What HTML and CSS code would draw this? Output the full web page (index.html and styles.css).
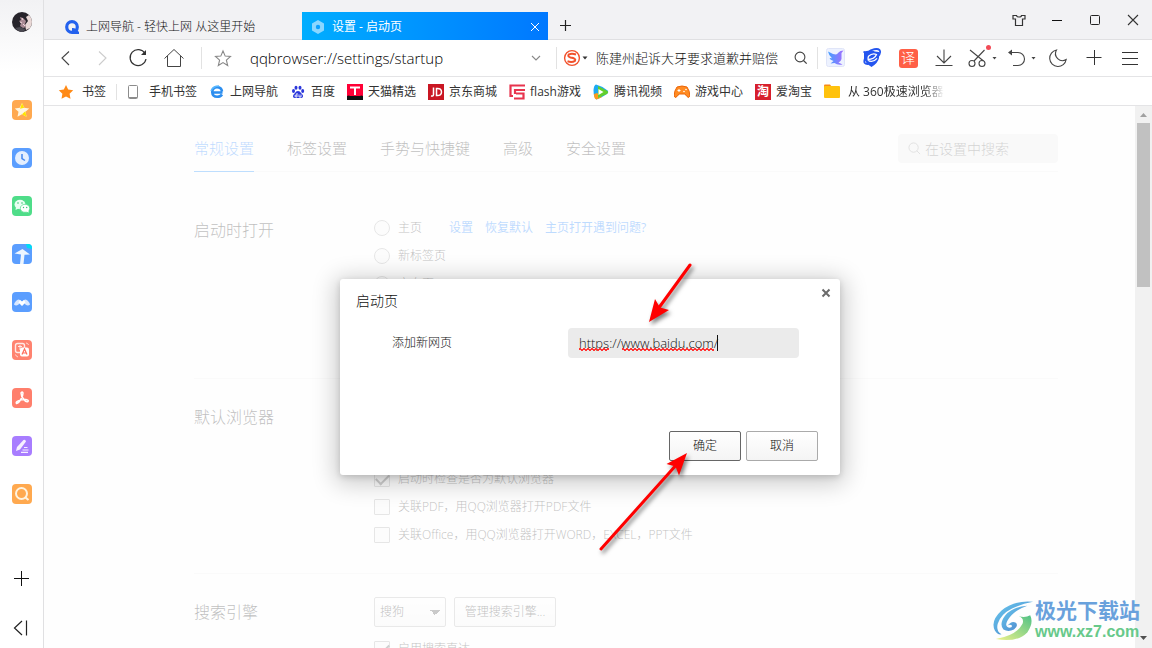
FILE: index.html
```html
<!DOCTYPE html>
<html lang="zh-CN">
<head>
<meta charset="utf-8">
<title>设置 - 启动页</title>
<link rel="stylesheet" href="styles.css">
</head>
<body>
<div class="browser">
  <aside class="sidebar">
    <button class="side-btn" aria-label="账号">
      <svg viewBox="0 0 20 20"><circle cx="10" cy="10" r="10" fill="#27242b"/><path d="M17 3a10 10 0 0 1 1 13l-4 2-1-5 3-4-2-4z" fill="#e9d8d6"/><path d="M8 5l3 1 3 3-1 3 1 3-3 1-3-2 1-3-2-2 2-1z" fill="#a98a94"/><path d="M10 6l1 2M8 10l2 1M11 12l2 2" stroke="#f0d7dc"/><path d="M3 16l5-1 5 2-1 3H8z" fill="#4b4951"/></svg>
    </button>
    <nav class="side-apps">
      <button class="side-btn" aria-label="收藏"><svg viewBox="0 0 20 20"><rect width="20" height="20" rx="4" fill="#ffa950"/><path d="M10 3l2.200 4.800 5 .6-3.700 3.400 1 5-4.500-2.500-4.500 2.500 1-5-3.700-3.400 5-.6z" fill="#fff6df"/><path d="M10 3l2.200 4.800-4.200 1zM14.500 16.800L10 14.300l3.300-3z" fill="#ffe500"/></svg></button>
      <button class="side-btn" aria-label="历史"><svg viewBox="0 0 20 20"><rect width="20" height="20" rx="4" fill="#5b9eff"/><circle cx="10" cy="10" r="7" fill="#e4efff"/><path d="M10 6v4.500l3 2" fill="none" stroke="#4286ee" stroke-width="1.500"/></svg></button>
      <button class="side-btn" aria-label="微信"><svg viewBox="0 0 20 20"><rect width="20" height="20" rx="4" fill="#4fdd89"/><ellipse cx="8" cy="8.500" rx="5.500" ry="4.700" fill="#e9fff2"/><path d="M4 11l-.5 3 3-1.500z" fill="#e9fff2"/><ellipse cx="13" cy="12.300" rx="4.700" ry="4" fill="#fff" stroke="#4fdd89" stroke-width=".7"/><path d="M14 15l2.500 1.700v-3z" fill="#fff"/><g fill="#3bc475"><circle cx="6" cy="7" r=".8"/><circle cx="10" cy="7" r=".8"/><circle cx="11.500" cy="11.500" r=".7"/><circle cx="14.700" cy="11.500" r=".7"/></g></svg></button>
      <button class="side-btn" aria-label="文档"><svg viewBox="0 0 20 20"><rect width="20" height="20" rx="4" fill="#5b9eff"/><path d="M14 0h2a4 4 0 0 1 4 4v1l-5-1z" fill="#00dcf4"/><path d="M2.500 9.500L10.500 5l7.500 5.500-5.500.3L11.500 20H8l1-9.500z" fill="#eef6ff"/></svg></button>
      <button class="side-btn" aria-label="会议"><svg viewBox="0 0 20 20"><rect width="20" height="20" rx="4" fill="#5b9eff"/><path d="M2 12.500Q2 11 4 9q2-2.500 4-1l2 1.500 2-1.500q2-1.500 4 1 2 2 2 3.500-2 2-4.500 0L12 11l-2 2-2-2-1.500 1.500q-2.500 2-4.500 0z" fill="#d9e8ff"/><path d="M8 8l2 1.700L12 8l1.500 2.500L10 14l-3.500-3.500z" fill="#fff"/></svg></button>
      <button class="side-btn" aria-label="翻译"><svg viewBox="0 0 20 20"><rect width="20" height="20" rx="4" fill="#ff8370"/><rect x="3.500" y="3.500" width="9" height="9" rx="2" fill="none" stroke="#ffe9e5" stroke-width="1.400"/><path d="M6 6.500h4M8 5v5" stroke="#ffe9e5"/><rect x="8" y="7.500" width="9" height="9" rx="2" fill="#fff"/><path d="M10 14.500l2.500-5.500 2.500 5.500M11 13h3" fill="none" stroke="#ff6d5c" stroke-width="1.200"/><path d="M14 3q2 0 2.500 2M3.500 14.500q.5 2 2.500 2.500" fill="none" stroke="#ffd8d2"/></svg></button>
      <button class="side-btn" aria-label="PDF"><svg viewBox="0 0 20 20"><rect width="20" height="20" rx="4" fill="#ff7f6c"/><path d="M9 5q1.500-2 2 0 0 3-2 6-2 4-4.500 4.500-1-1.500 1.500-2.500 4-1.800 8-1.500 3 .5 2 2-2 1-4-2Q9 8.500 9 5z" fill="none" stroke="#fff" stroke-width="1.500"/></svg></button>
      <button class="side-btn" aria-label="笔记"><svg viewBox="0 0 20 20"><rect width="20" height="20" rx="4" fill="#a87dff"/><path d="M4 15l1-4 6.500-7q2-1 2.500 1.500L8 13.500z" fill="#f6f0ff"/><path d="M12 11.500h3.500M10.500 14h6M9 16.300h7" stroke="#f6f0ff" stroke-width="1.200"/></svg></button>
      <button class="side-btn" aria-label="搜索"><svg viewBox="0 0 20 20"><rect width="20" height="20" rx="4" fill="#ffa94f"/><circle cx="9.500" cy="9.500" r="5.500" fill="none" stroke="#fff3df" stroke-width="2"/><path d="M13.500 13.500l3 2.500" stroke="#fff3df" stroke-width="2.200"/></svg></button>
    </nav>
    <div class="side-foot">
      <button class="side-btn" aria-label="添加"><svg viewBox="0 0 20 20"><path d="M2 10.500h15M9.500 3v15" stroke="#111"/></svg></button>
      <button class="side-btn" aria-label="收起"><svg viewBox="0 0 20 20"><path d="M10 3L2.500 10 10 17M14.500 2.500v15" fill="none" stroke="#222" stroke-width="1.200"/></svg></button>
    </div>
  </aside>

  <div class="window">
    <header class="tabstrip">
      <div class="tab">
        <svg class="tab-icon" viewBox="0 0 14 14"><circle cx="7" cy="7" r="5.300" fill="none" stroke="#2462ee" stroke-width="3.200"/><path d="M7 8q3-.5 5 2l2 2v2H7z" fill="#2462ee"/></svg>
        <span>上网导航 - 轻快上网 从这里开始</span>
      </div>
      <div class="tab tab-active">
        <svg class="tab-icon" viewBox="0 0 14 14"><path d="M7 0l6 3.500v7L7 14l-6-3.500v-7z" fill="#8bd7ff"/><circle cx="7" cy="7" r="2.200" fill="#0ba0ff"/></svg>
        <span>设置 - 启动页</span>
        <button class="tab-close" aria-label="关闭标签页"><svg viewBox="0 0 10 10"><path d="M1 1l8 8M9 1L1 9" stroke="#fff"/></svg></button>
      </div>
      <button class="newtab" aria-label="新建标签页"><svg viewBox="0 0 12 12"><path d="M0 5.500h11M5.500 0v11" stroke="#222" stroke-width="1.200"/></svg></button>
      <div class="window-controls">
        <button aria-label="皮肤"><svg viewBox="0 0 14 14"><path d="M1 2.500h3.500q0 1.500 2.500 1.500t2.500-1.500H13V6h-2.500v6.500h-7V6H1z" fill="none" stroke="#333" stroke-width="1.200"/></svg></button>
        <button aria-label="最小化"><svg viewBox="0 0 14 14"><path d="M2 7.500h10" stroke="#111"/></svg></button>
        <button aria-label="最大化"><svg viewBox="0 0 14 14"><rect x="2.500" y="2.500" width="9" height="9" rx="1" fill="none" stroke="#222"/></svg></button>
        <button aria-label="关闭"><svg viewBox="0 0 14 14"><path d="M2 2l10 10M12 2L2 12" stroke="#333" stroke-width="1.100"/></svg></button>
      </div>
    </header>

    <div class="toolbar">
      <button class="tool" aria-label="后退"><svg viewBox="0 0 20 20"><path d="M13 3.500L6 10l7 7" fill="none" stroke="#444" stroke-width="1.100"/></svg></button>
      <button class="tool" aria-label="前进"><svg viewBox="0 0 20 20"><path d="M7 3.500l7 6.500-7 7" fill="none" stroke="#ccc" stroke-width="1.100"/></svg></button>
      <button class="tool" aria-label="刷新"><svg viewBox="0 0 20 20"><path d="M17 5.500A8 8 0 1 0 18 11" fill="none" stroke="#333" stroke-width="1.200"/><path d="M18 2v5h-5z" fill="#333"/></svg></button>
      <button class="tool" aria-label="主页"><svg viewBox="0 0 20 20"><path d="M.5 10.500L10 1.500l9.500 9M3.500 8v10.500h13V8" fill="none" stroke="#444"/></svg></button>
      <span class="divider divider-nav"></span>
      <button class="tool" aria-label="收藏此页"><svg viewBox="0 0 20 20"><path d="M10 3l2.200 5.100 5.300.4-4.100 3.600 1.300 5.400-4.700-2.900-4.700 2.900 1.300-5.400-4.100-3.600 5.300-.4z" fill="none" stroke="#888" stroke-width="1.100"/></svg></button>
      <input class="address" type="text" aria-label="地址" value="qqbrowser://settings/startup">
      <button class="tool" aria-label="展开地址"><svg viewBox="0 0 20 20"><path d="M4 8l4 4 4-4" fill="none" stroke="#888" stroke-width="1.100"/></svg></button>
      <span class="divider"></span>
      <div class="quick-search">
        <button class="engine" aria-label="搜狗"><svg viewBox="0 0 26 18"><circle cx="9" cy="9" r="7.400" fill="none" stroke="#f2512c" stroke-width="1.400"/><path d="M13 5.500Q9 4 6 5.300q-2 2 1.500 3.200 6 .8 4.500 3.300-3 2-7.500.5" fill="none" stroke="#f2512c" stroke-width="2"/><path d="M19.500 7.500h5L22 10.500z" fill="#333"/></svg></button>
        <input type="text" aria-label="搜索" value="陈建州起诉大牙要求道歉并赔偿">
        <button class="go" aria-label="开始搜索"><svg viewBox="0 0 14 14"><circle cx="6" cy="6" r="4.900" fill="none" stroke="#444" stroke-width="1.100"/><path d="M9.500 9.500l3.200 3.200" stroke="#444" stroke-width="1.200"/></svg></button>
      </div>
      <span class="divider"></span>
      <button class="tool" aria-label="飞鸟"><svg viewBox="0 0 20 20"><defs><linearGradient id="bird" x2="1"><stop stop-color="#43a0ff"/><stop offset="1" stop-color="#a26dff"/></linearGradient></defs><rect x=".5" y=".5" width="18" height="18" rx="2" fill="#edf2ff" stroke="#e0e5f8"/><path d="M2 3.500q4 2.500 8 3 1.500-.5 2.500-2 1.500-2 5-2l-2 2.500v6q-.5 2.500-3 3.500l4 2q-5 1-8-1.500l-4 .5 3-2.500Q4 12 3.500 10l2.500.3Q3 8 2 3.500z" fill="url(#bird)"/></svg></button>
      <button class="tool" aria-label="极速内核"><svg viewBox="0 0 20 20"><path d="M1.500 4q5 .5 8-2 6-2 8 0 2 3-2 7-5 6-10 7-4 0-3-4 1-4 6-8" fill="none" stroke="#2455ef" stroke-width="1.800"/><path d="M2 4q4 .5 7.500-2 3 2 7.500 2v6q-1 5-7.500 9-6.500-4-7.500-9z" fill="#2455ef"/><path d="M5.500 11.500q7 0 9-5-4-2-8 1.800-2 5 3 5 3 0 5.500-3" fill="none" stroke="#fff" stroke-width="1.300"/></svg></button>
      <button class="tool" aria-label="翻译"><span class="translate">译</span></button>
      <button class="tool" aria-label="下载"><svg viewBox="0 0 20 20"><path d="M10 1.500v13M3 8l7 7 7-7M1.500 17.500h17" fill="none" stroke="#444" stroke-width="1.100"/></svg></button>
      <button class="tool tool-menu" aria-label="截图"><svg viewBox="0 0 32 26"><g fill="none" stroke="#444" stroke-width="1.100"><path d="M4 5l13.500 11M18.500 5L8 16"/><circle cx="6" cy="18.500" r="3"/><circle cx="16" cy="18.500" r="3"/></g><circle cx="22.500" cy="2.500" r="2.500" fill="#f24b57"/><path d="M26.500 12h4l-2 2.500z" fill="#444"/></svg></button>
      <button class="tool tool-menu" aria-label="撤销"><svg viewBox="0 0 32 26"><path d="M5 7.500h8a6.500 6.500 0 0 1 0 13H8" fill="none" stroke="#444" stroke-width="1.100"/><path d="M3 7.500L7 4.500v6zM26.500 12h4l-2 2.500z" fill="#444"/></svg></button>
      <button class="tool" aria-label="夜间模式"><svg viewBox="0 0 20 20"><path d="M8.500 2a8.300 8.300 0 1 0 9.700 9.500A7 7 0 0 1 8.500 2z" fill="none" stroke="#444" stroke-width="1.100"/></svg></button>
      <button class="tool" aria-label="添加扩展"><svg viewBox="0 0 20 20"><path d="M2.500 9.500h15M10.500 2v15" stroke="#333"/></svg></button>
      <button class="tool" aria-label="菜单"><svg viewBox="0 0 20 20"><path d="M2 4.500h16M2 10.500h16M2 16.500h16" stroke="#333"/></svg></button>
    </div>

    <nav class="bookmarks">
      <a class="bookmark bookmark-wide" href="#"><svg viewBox="0 0 16 16"><path d="M8 1l2.200 4.600 5 .7-3.600 3.500.9 5L8 12.400l-4.500 2.400.9-5L.8 6.300l5-.7z" fill="#ff8a16"/></svg>书签</a>
      <span class="divider divider-mark"></span>
      <a class="bookmark bookmark-wide" href="#"><svg viewBox="0 0 16 16"><rect x="3.500" y="1.500" width="9" height="13" rx="1" fill="#fff" stroke="#8c8c8c"/><path d="M4 13.500h8" stroke="#8c8c8c"/></svg>手机书签</a>
      <a class="bookmark" href="#"><svg viewBox="0 0 16 16"><path d="M13.500 8.500H4M13 7.500Q12.500 3.200 8 3.200T3.200 8q.3 4.800 5 4.800 3.300 0 4.800-2.300" fill="none" stroke="#2c8eef" stroke-width="2.600"/><path d="M2 7q2-5 8-5" fill="none" stroke="#56b7ff" stroke-width="1.500"/></svg>上网导航</a>
      <a class="bookmark" href="#"><svg viewBox="0 0 16 16"><g fill="#2b37db"><ellipse cx="3.500" cy="7" rx="1.500" ry="2"/><ellipse cx="6" cy="3.800" rx="1.500" ry="2"/><ellipse cx="10" cy="3.800" rx="1.500" ry="2"/><ellipse cx="12.700" cy="7" rx="1.500" ry="2"/><path d="M8 7q2 0 3 2 2.700 2 2 3.700-.8 1.800-3 1.300H6q-2.500.5-3-1.300-.5-1.700 2-3.700Q6 7 8 7z"/></g><path d="M7 9v4H5.500q-1.200-1 0-2H7M9 10.500v2.500h2v-2.500" fill="none" stroke="#fff" stroke-width=".9"/></svg>百度</a>
      <a class="bookmark" href="#"><svg viewBox="0 0 16 16"><path fill="#ff0036" d="M0 0h16v13H0z"/><path fill="#111" d="M0 12q2-1 3 0h10q1-1 3 0v4H0z"/><path d="M3 3.500h10M8 3.500V11" stroke="#fff" stroke-width="2"/></svg>天猫精选</a>
      <a class="bookmark" href="#"><svg viewBox="0 0 16 16"><path fill="#c91623" d="M0 0h16v16H0z"/><path d="M5.500 3.500v7q0 2-2.500 1.500M8.500 4.500v7q5 .5 5-3.500t-5-3.500z" fill="none" stroke="#fff" stroke-width="1.500"/></svg>京东商城</a>
      <a class="bookmark" href="#"><svg viewBox="0 0 16 16"><path d="M16 1.500H1.500V12H4M16 6H6v4M7 9.500h7.500v5H5" fill="none" stroke="#e8344e" stroke-width="2.200"/></svg>flash游戏</a>
      <a class="bookmark" href="#"><svg viewBox="0 0 16 16"><path d="M3 .5Q1 1 .5 6q0 8 3 9.500Q8 14 14.500 9.500q1.500-1.500 0-3Q9 2 3 .5z" fill="#1caaf2"/><path d="M1 10q0 5 2.500 5.500Q7 14 9 13L4 9z" fill="#ff9a1a"/><path d="M5 2l9.500 5q1.500 1.500-.5 3L5 14z" fill="#62cf2c"/><path d="M5.500 5v6l5-3z" fill="#fff"/></svg>腾讯视频</a>
      <a class="bookmark" href="#"><svg viewBox="0 0 16 16"><path d="M3 3q5-2 10 0 3 4 2.800 9-1 3-3.300 0L11 10H5l-1.500 2Q1 15 .2 12 0 7 3 3z" fill="#ff8b22" stroke="#ec6507"/><path d="M3.500 6.500h3M5 5v3" stroke="#fff"/><circle cx="10" cy="7.500" r=".8" fill="#fff"/><circle cx="12" cy="5.500" r=".8" fill="#fff"/></svg>游戏中心</a>
      <a class="bookmark" href="#"><span class="mark-tao">淘</span>爱淘宝</a>
      <a class="bookmark bookmark-wide bookmark-clip" href="#"><svg viewBox="0 0 16 16"><path d="M0 1.500Q0 .5 1 .5h5L8 3H0z" fill="#f98a16"/><rect y="2" width="16" height="12" rx="1" fill="#ffc20d"/></svg>从 360极速浏览器</a>
    </nav>

    <div class="viewport">
      <div class="page">
        <main class="settings">
          <div class="settings-head">
            <nav class="settings-tabs">
              <a class="current" href="#">常规设置</a>
              <a href="#">标签设置</a>
              <a href="#">手势与快捷键</a>
              <a href="#">高级</a>
              <a href="#">安全设置</a>
            </nav>
            <label class="settings-search">
              <svg viewBox="0 0 14 14"><circle cx="6" cy="6" r="5" fill="none" stroke="#888"/><path d="M9.500 9.500l3.500 3.500" stroke="#888"/></svg>
              <input type="text" placeholder="在设置中搜索" aria-label="在设置中搜索">
            </label>
          </div>
          <section class="group group-startup">
            <h2>启动时打开</h2>
            <div class="options">
              <div class="option">
                <label><input type="radio" name="startup"> 主页</label>
                <span class="links"><a href="#">设置</a><a href="#">恢复默认</a><a href="#">主页打开遇到问题?</a></span>
              </div>
              <div class="option"><label><input type="radio" name="startup"> 新标签页</label></div>
              <div class="option"><label><input type="radio" name="startup"> 空白页</label></div>
            </div>
          </section>
          <section class="group group-default">
            <h2>默认浏览器</h2>
            <div class="options">
              <div class="option"><label><input type="checkbox" checked> 启动时检查是否为默认浏览器</label></div>
              <div class="option"><label><input type="checkbox"> 关联PDF，用QQ浏览器打开PDF文件</label></div>
              <div class="option"><label><input type="checkbox"> 关联Office，用QQ浏览器打开WORD，EXCEL，PPT文件</label></div>
            </div>
          </section>
          <section class="group group-search">
            <h2>搜索引擎</h2>
            <div class="options">
              <div class="controls">
                <select aria-label="搜索引擎"><option>搜狗</option></select>
                <button class="btn btn-wide">管理搜索引擎...</button>
              </div>
              <div class="option"><label><input type="checkbox" checked> 启用搜索直达</label></div>
            </div>
          </section>
        </main>
        <div class="overlay">
          <form class="dialog" role="dialog" aria-labelledby="dialog-title">
            <div class="dialog-head">
              <h1 id="dialog-title">启动页</h1>
              <button class="dialog-close" type="button" aria-label="关闭"><svg viewBox="0 0 10 10"><path d="M1.500 1.500l7 7M8.500 1.500l-7 7" stroke="#6b6b6b" stroke-width="2"/></svg></button>
            </div>
            <div class="dialog-row">
              <label for="new-url">添加新网页</label>
              <div class="field">
                <input id="new-url" type="text" spellcheck="false" value="https://www.baidu.com/">
                <span class="squiggle squiggle-scheme"></span>
                <span class="squiggle squiggle-host"></span>
                <span class="caret"></span>
              </div>
            </div>
            <div class="dialog-actions">
              <button class="btn btn-primary" type="button">确定</button>
              <button class="btn" type="button">取消</button>
            </div>
          </form>
        </div>
      </div>
      <div class="scrollbar">
        <svg viewBox="0 0 17 17"><path d="M5 11h7L8.500 7z" fill="#a0a0a0"/></svg>
        <div class="thumb"></div>
        <svg class="scroll-down" viewBox="0 0 17 17"><path d="M5 6h7l-3.500 4z" fill="#505050"/></svg>
      </div>
    </div>
  </div>
</div>

<svg class="arrow arrow-field" viewBox="0 0 60 72"><path d="M50 5L18 49" stroke="#f00" stroke-width="3" stroke-linecap="round"/><path d="M9 62l6-23 5 8.500L29 50z" fill="#f00"/></svg>
<svg class="arrow arrow-confirm" viewBox="0 0 104 112"><path d="M9 103L86 17" stroke="#f00" stroke-width="3" stroke-linecap="round"/><path d="M95 7L74.500 18l9 2.500L87 29.500z" fill="#f00"/></svg>

<div class="watermark">
  <svg viewBox="0 0 46 44"><defs><linearGradient id="wave" y2="1"><stop stop-color="#68c9ef"/><stop offset="1" stop-color="#4c82c9"/></linearGradient><linearGradient id="leaf" x1="1" x2="0" y2="1"><stop stop-color="#4fc186"/><stop offset="1" stop-color="#eff28a"/></linearGradient></defs><path d="M44 3Q25 1 11 12-1 23 4 33q3 5 7 4-6-3-4-11 3-10 15-16Q32 5 44 3z" fill="url(#wave)"/><path d="M38 7Q23 8 15 17q-7 9-2 15 5 3 11 0 5-4 2-7-4-3-9 3 3-2 5 0 0 2-3 2-5-1-2-7Q23 12 38 7z" fill="url(#wave)"/><path d="M29 18q6 2 4 8-6 12-28 16 22 4 33-7 7-10 3-18-5 3-12 1z" fill="url(#leaf)"/></svg>
  <div class="watermark-text"><strong>极光下载站</strong><span>www.xz7.com</span></div>
</div>
</body>
</html>
```

FILE: styles.css
```css
* { box-sizing: border-box; }

body {
  margin: 0;
  font: 300 12px/16px "Open Sans", "Noto Sans CJK SC", sans-serif;
  color: #111;
  background: #fff;
  overflow: hidden;
}

button, input, select { font: inherit; color: inherit; }
button { padding: 0; border: 0; background: none; }
input { padding: 0; border: 0; background: none; min-width: 0; outline: 0; }
a { color: inherit; text-decoration: none; }
h1, h2 { margin: 0; font-weight: inherit; }
svg { display: block; flex: none; }

.browser { display: flex; height: 100vh; }

/* Sidebar */
.sidebar {
  flex: none;
  width: 44px;
  padding: 12px 0 10px;
  display: flex;
  flex-direction: column;
  align-items: center;
  border-right: 1px solid #e0e0e2;
  background: linear-gradient(#f2f2f4, #fff 72px);
}
.side-btn, .side-btn svg { width: 20px; height: 20px; }
.side-apps, .side-foot { display: flex; flex-direction: column; gap: 28px; }
.side-apps { margin-top: 68px; }
.side-foot { margin-top: auto; gap: 30px; }

.window { flex: 1; min-width: 0; display: flex; flex-direction: column; }

/* Tab strip */
.tabstrip {
  height: 40px;
  padding-left: 12px;
  display: flex;
  align-items: flex-end;
  background: #f2f2f4;
  box-shadow: inset 0 -1px #e0e0e2;
}
.tab {
  width: 246px;
  height: 28px;
  padding: 1px 8px 0 9px;
  display: flex;
  align-items: center;
  gap: 7px;
}
.tab-icon { width: 14px; height: 14px; }
.tab-active { color: #fff; background: linear-gradient(90deg, #00aeff, #0078ff); font-weight: 400; }
.tab-close { margin-left: auto; }
.tab-close svg { width: 10px; height: 10px; }
.newtab { width: 36px; height: 28px; display: grid; place-items: center; }
.newtab svg { width: 12px; height: 12px; }
.window-controls { margin-left: auto; align-self: stretch; display: flex; }
.window-controls button { width: 38px; display: grid; place-items: center; }
.window-controls svg { width: 14px; height: 14px; }

/* Toolbar */
.toolbar {
  height: 37px;
  padding: 0 4px;
  display: flex;
  align-items: center;
  border-bottom: 1px solid #e4e4e6;
}
.tool { flex: none; width: 36px; height: 36px; display: grid; place-items: center; }
.tool svg { width: 20px; height: 20px; }
.tool-menu { width: 39px; }
.tool-menu svg { width: 32px; height: 26px; }
.divider { flex: none; width: 1px; height: 22px; background: #e2e2e2; }
.divider-nav { margin: 0 3px 0 9px; }
.address {
  flex: 1;
  padding-left: 9px;
  font-size: 15px;
  line-height: 24px;
  color: #000;
}
.quick-search { width: 260px; padding: 0 9px 0 6px; display: flex; align-items: center; gap: 7px; }
.quick-search input { flex: 1; font-size: 13px; line-height: 20px; }
.engine svg { width: 26px; height: 18px; }
.go svg { width: 14px; height: 14px; }
.translate {
  width: 19px;
  height: 19px;
  border-radius: 3px;
  background: #ff5f46;
  color: #fff;
  font-size: 14px;
  line-height: 18px;
}

/* Bookmarks bar */
.bookmarks {
  height: 29px;
  padding: 1px 0 0 14px;
  display: flex;
  align-items: center;
  gap: 12px;
  border-bottom: 1px solid #e4e4e6;
  font-weight: 400;
  color: #333;
  white-space: nowrap;
}
.bookmark { flex: none; display: flex; align-items: center; gap: 5px; }
.bookmark svg { width: 16px; height: 16px; }
.bookmark-wide { gap: 8px; }
.divider-mark { height: 16px; margin: 0 -4px 0 -2px; }
.mark-tao { width: 16px; height: 16px; background: #d71f2c; color: #fff; text-align: center; font-weight: 700; line-height: 15px; }
.bookmark-clip { mask-image: linear-gradient(90deg, #000 100px, transparent 120px); }

/* Settings page */
.viewport { flex: 1; min-height: 0; display: flex; }
.page { position: relative; flex: 1; min-width: 0; overflow: hidden; }
.settings { padding: 28px 77px 0 150px; color: #000; }
.settings-head {
  height: 38px;
  display: flex;
  align-items: flex-start;
  justify-content: space-between;
  box-shadow: inset 0 -1px #eee;
}
.settings-tabs { display: flex; gap: 33px; font-size: 15px; line-height: 28px; }
.settings-tabs a { height: 38px; white-space: nowrap; }
.settings-tabs .current { color: #0074ff; border-bottom: 1px solid #0080ff; }
.settings-search {
  width: 160px;
  height: 29px;
  padding: 0 10px;
  display: flex;
  align-items: center;
  gap: 4px;
  border-radius: 4px;
  background: #eaeaea;
}
.settings-search svg { width: 13px; height: 13px; }
.settings-search input { flex: 1; font-size: 14px; line-height: 20px; }
.settings-search input::placeholder { color: #555; }

.group { display: grid; grid-template-columns: 180px 1fr; align-items: start; }
.group + .group { border-top: 1px solid #eee; }
.group h2 { padding-top: 26px; font-size: 16px; line-height: 24px; }
.group-startup { height: 206px; padding-top: 20px; }
.group-startup .options { padding-top: 22px; }
.group-default { height: 195px; }
.group-default .options { padding-top: 86px; }
.group-search .options { padding-top: 23px; }
.option { height: 28px; display: flex; align-items: center; gap: 27px; white-space: nowrap; }
.option label { display: flex; align-items: center; gap: 8px; }
.links { display: flex; gap: 12px; color: #0074ff; font-weight: 400; }
.controls { display: flex; gap: 8px; padding-bottom: 8px; }
input[type="radio"], input[type="checkbox"] {
  appearance: none;
  flex: none;
  width: 16px;
  height: 16px;
  margin: 0;
  border: 1px solid #a0a0a0;
  border-radius: 1px;
  background: #f8f8f8;
}
input[type="radio"] { border-radius: 50%; }
input[type="checkbox"]:checked { display: grid; place-items: center; }
input[type="checkbox"]:checked::before {
  content: "";
  width: 11px;
  height: 6px;
  margin-bottom: 3px;
  border: solid #444;
  border-width: 0 0 2px 2px;
  rotate: -45deg;
}
.btn, select {
  width: 72px;
  height: 30px;
  border: 1px solid #aaa;
  border-radius: 2px;
  background: linear-gradient(#fff, #f4f4f4);
}
select {
  appearance: none;
  padding: 0 5px;
  background:
    linear-gradient(to bottom right, #333 50%, transparent 50%) 60px 12px / 5px 5px no-repeat,
    linear-gradient(to bottom left, #333 50%, transparent 50%) 55px 12px / 5px 5px no-repeat,
    linear-gradient(#fff, #f4f4f4);
}
.btn-wide { width: 102px; }
.btn-primary { border-color: #666; }

/* Modal dialog */
.overlay {
  position: absolute;
  inset: 0;
  padding-left: 1px;
  display: grid;
  place-items: center;
  background: rgba(253, 253, 253, .75);
}
.dialog {
  width: 500px;
  padding: 8px 8px 14px 16px;
  border-radius: 3px;
  background: #fff;
  box-shadow: 0 4px 23px 5px rgba(0, 0, 0, .2), 0 2px 6px rgba(0, 0, 0, .15);
}
.dialog-head { display: flex; justify-content: space-between; align-items: flex-start; }
.dialog-head h1 { padding-top: 2px; font-size: 14px; line-height: 24px; }
.dialog-close { width: 12px; height: 12px; display: grid; place-items: center; }
.dialog-close svg { width: 10px; height: 10px; }
.dialog-row { margin: 15px 33px 0 36px; display: flex; align-items: center; justify-content: space-between; }
.field { position: relative; width: 231px; height: 30px; border-radius: 4px; background: #ebebeb; }
.field input { width: 100%; height: 30px; padding: 0 11px; font-size: 13px; }
.squiggle {
  position: absolute;
  top: 20px;
  height: 3px;
  background:
    linear-gradient(45deg, transparent 40%, #f33 40% 65%, transparent 65%) 0 0 / 4px 3px,
    linear-gradient(-45deg, transparent 40%, #f33 40% 65%, transparent 65%) 2px 0 / 4px 3px;
}
.squiggle-scheme { left: 11px; width: 30px; }
.squiggle-host { left: 54px; width: 92px; }
.caret { position: absolute; left: 149px; top: 7px; width: 1px; height: 16px; background: #111; }
.dialog-actions { margin: 73px 14px 0 0; display: flex; justify-content: flex-end; gap: 5px; }

/* Scrollbar */
.scrollbar { flex: none; width: 17px; padding-bottom: 1px; display: flex; flex-direction: column; background: #f1f1f1; }
.scrollbar svg { width: 17px; height: 17px; }
.thumb { height: 164px; margin: 0 2px; background: #c1c1c1; }
.scroll-down { margin-top: auto; }

/* Callout arrows drawn over the page */
.arrow { position: absolute; filter: drop-shadow(2px 3px 2px rgba(0, 0, 0, .5)); }
.arrow-field { left: 640px; top: 260px; width: 60px; height: 72px; }
.arrow-confirm { left: 592px; top: 446px; width: 104px; height: 112px; }

.watermark { position: absolute; right: 12px; bottom: 7px; display: flex; align-items: center; }
.watermark svg { width: 44px; height: 42px; }
.watermark-text { display: flex; flex-direction: column; }
.watermark-text strong { font-size: 21px; font-weight: 700; line-height: 25px; color: #69a1dc; }
.watermark-text span { font: 700 16px/18px "Liberation Sans", sans-serif; color: #67c98a; }
```
